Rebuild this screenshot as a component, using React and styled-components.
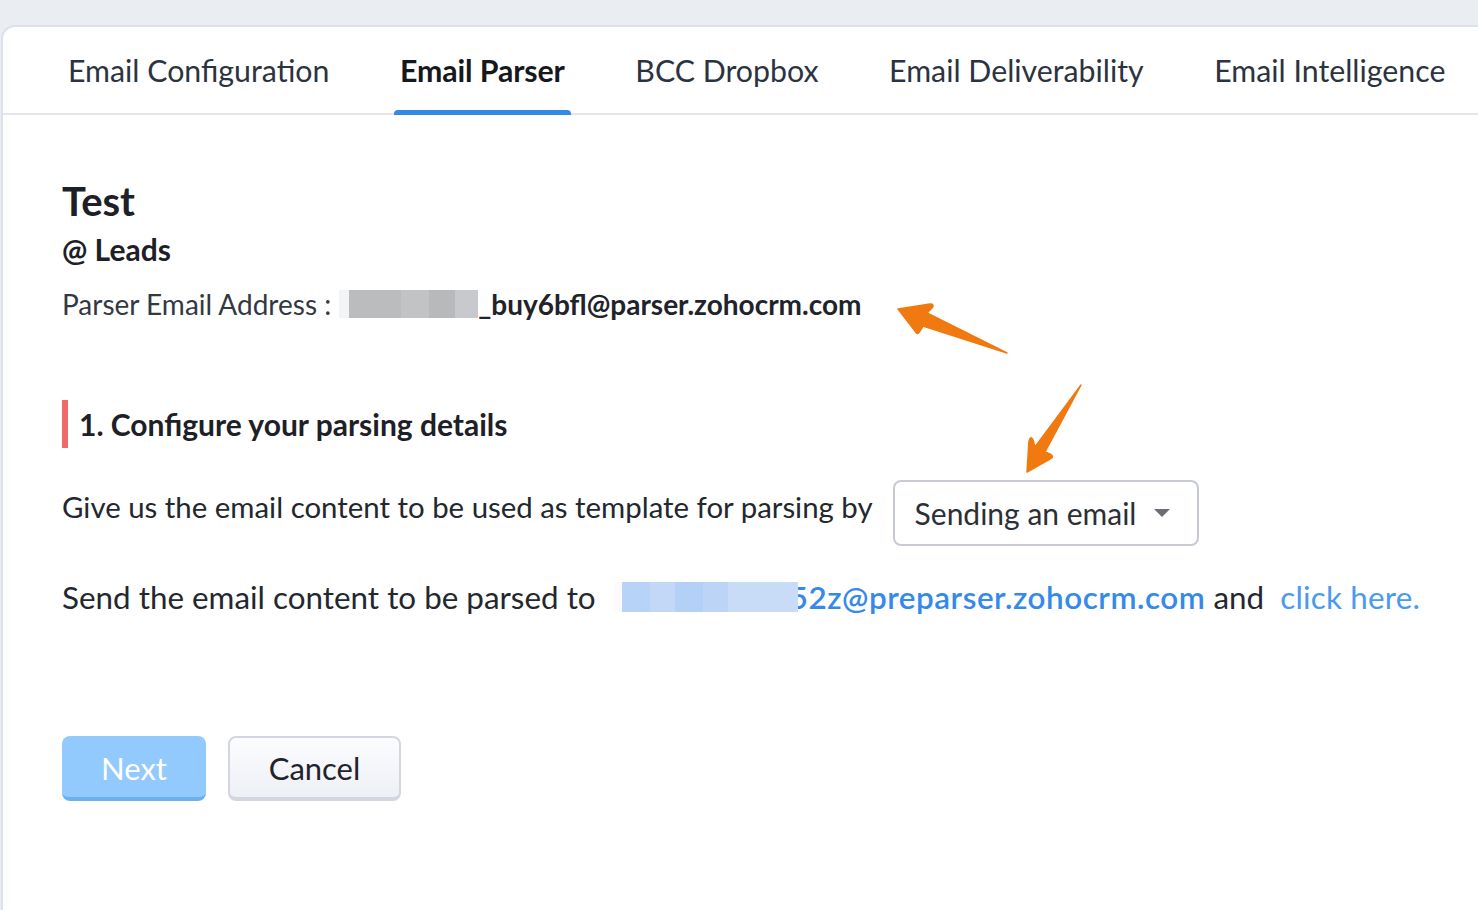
import React from "react";
import styled, { createGlobalStyle } from "styled-components";

const Global = createGlobalStyle`
  html, body { margin: 0; padding: 0; }
  body {
    background: #eaedf2;
    font-family: Lato, "Noto Sans", sans-serif;
    color: #2b2f36;
    width: 1478px;
    height: 910px;
    overflow: hidden;
  }
`;

const Page = styled.div`
  position: relative;
  padding-top: 25px;
  height: 910px;
  box-sizing: border-box;
`;

const Panel = styled.div`
  margin-left: 1px;
  height: 885px;
  background: #fff;
  border-top: 2px solid #dde1ea;
  border-left: 2px solid #dde1ea;
  border-top-left-radius: 14px;
  box-sizing: border-box;
`;

const Tabs = styled.nav`
  display: flex;
  height: 88px;
  border-bottom: 2px solid #e3e6ec;
  padding-left: 59px;
  box-sizing: border-box;
  white-space: nowrap;
`;

const Tab = styled.div`
  position: relative;
  flex-shrink: 0;
  display: flex;
  align-items: center;
  padding: 0 6px;
  margin-right: 58.5px;
  font-size: 30.3px;
  font-weight: ${(p) => (p.$active ? 700 : 400)};
  color: ${(p) => (p.$active ? "#15181d" : "#2c3340")};
  letter-spacing: ${(p) => (p.$active ? "-0.1px" : "0")};
  &::after {
    content: "";
    display: ${(p) => (p.$active ? "block" : "none")};
    position: absolute;
    left: 0;
    right: 0;
    bottom: -2px;
    height: 5px;
    background: #3589e6;
    border-radius: 4px 4px 0 0;
  }
`;

const Content = styled.div`
  padding: 62px 0 0 59px;
`;

const Title = styled.h1`
  margin: 0;
  font-size: 40px;
  font-weight: 700;
  color: #1d2026;
  line-height: 48px;
`;

const Module = styled.div`
  font-size: 30px;
  font-weight: 700;
  color: #1d2026;
  line-height: 48px;
`;

const AddressRow = styled.div`
  display: flex;
  align-items: center;
  margin-top: 11px;
  font-size: 28px;
  color: #333842;
  line-height: 40px;
  white-space: nowrap;
`;

const Blur = styled.span`
  position: relative;
  z-index: 1;
  display: inline-block;
  flex-shrink: 0;
  width: ${(p) => p.$w}px;
  height: ${(p) => p.$h || 28}px;
  background: ${(p) => p.$bg};
  margin-left: ${(p) => p.$ml || 0}px;
  margin-right: ${(p) => p.$mr || 0}px;
`;

const Strong = styled.span`
  font-weight: 700;
  color: #1f232a;
`;

const Section = styled.h2`
  margin: 76px 0 0 0;
  padding-left: 11px;
  border-left: 6px solid #f06a6a;
  font-size: 30px;
  font-weight: 700;
  line-height: 48px;
  color: #1d2026;
`;

const Line = styled.div`
  display: flex;
  align-items: center;
  white-space: nowrap;
  font-size: ${(p) => p.$fs}px;
  line-height: 44px;
  color: #23272e;
  margin-top: ${(p) => p.$mt}px;
`;

const Label = styled.span`
  margin-bottom: 12px;
`;

const Select = styled.div`
  display: flex;
  align-items: center;
  justify-content: space-between;
  width: 306px;
  height: 66px;
  box-sizing: border-box;
  margin-left: 20px;
  padding: 0 27px 0 20px;
  border: 2px solid #c6cad2;
  border-radius: 8px;
  font-size: 30px;
  color: #2b2f36;
`;

const Caret = styled.span`
  width: 0;
  height: 0;
  border-left: 8px solid transparent;
  border-right: 8px solid transparent;
  border-top: 8px solid #6b6e74;
`;

const Link = styled.span`
  color: ${(p) => p.$c};
  font-weight: ${(p) => p.$w || 400};
  letter-spacing: ${(p) => p.$ls || 0}px;
`;

const Buttons = styled.div`
  display: flex;
  gap: 22px;
  margin-top: 117px;
`;

const Button = styled.button`
  height: 65px;
  width: ${(p) => p.$w}px;
  box-sizing: border-box;
  border-radius: 8px;
  font-family: Lato, "Noto Sans", sans-serif;
  font-size: 31px;
  cursor: pointer;
  ${(p) =>
    p.$primary
      ? `background: #93cafd; color: #fff; border: none; border-bottom: 4px solid #6db0ee; padding-top: 4px;`
      : `background: linear-gradient(#fcfcfe, #edf0f6); color: #1f232a; border: 2px solid #d3d6de; border-bottom-width: 4px;`}
`;

const Arrow = styled.svg`
  position: absolute;
  left: ${(p) => p.$x}px;
  top: ${(p) => p.$y}px;
  overflow: visible;
`;

export default function App() {
  return (
    <>
      <Global />
      <Page>
        <Panel>
          <Tabs>
            <Tab>Email Configuration</Tab>
            <Tab $active>Email Parser</Tab>
            <Tab>BCC Dropbox</Tab>
            <Tab>Email Deliverability</Tab>
            <Tab>Email Intelligence</Tab>
          </Tabs>
          <Content>
            <Title>Test</Title>
            <Module>@ Leads</Module>
            <AddressRow>
              Parser Email Address :
              <Blur $w={10} $bg="#f3f4f5" $ml={8} />
              <Blur $w={129} $bg="linear-gradient(90deg,#bbbcbe 0 40%,#c2c3c5 40% 62%,#b8b9bb 62% 82%,#c8c9cc 82%)" />
              <Strong>_buy6bfl@parser.zohocrm.com</Strong>
            </AddressRow>
            <Section>1. Configure your parsing details</Section>
            <Line $fs={29.4} $mt={32}>
              <Label>Give us the email content to be used as template for parsing by</Label>
              <Select>
                Sending an email
                <Caret />
              </Select>
            </Line>
            <Line $fs={31.4} $mt={29}>
              Send the email content to be parsed to
              <Blur $w={8} $h={30} $bg="#fbfbfd" $ml={18} />
              <Blur $w={176} $h={30} $mr={-8} $bg="linear-gradient(90deg,#b7d3f7 0 16%,#c3d8f7 16% 30%,#b3d0f7 30% 46%,#bcd5f7 46% 60%,#c8dcf8 60%)" />
              <Link $c="#3489ea" $w={600} $ls={0.55}>52z@preparser.zohocrm.com</Link>
              &nbsp;and&nbsp;&nbsp;
              <Link $c="#4a9af0" $ls={0.2}>click here.</Link>
            </Line>
            <Buttons>
              <Button $primary $w={144}>Next</Button>
              <Button $w={173}>Cancel</Button>
            </Buttons>
          </Content>
        </Panel>
        <Arrow $x={890} $y={295} width="125" height="65" viewBox="890 295 125 65">
          <path
            d="M898 309 L930 304 Q935 304 932 308 L927 313 L1007 353 L923 326 L920 331 Q917 336 915 331 Z"
            fill="#f07a10"
            stroke="#f07a10"
            strokeWidth="1.5"
            strokeLinejoin="round"
          />
        </Arrow>
        <Arrow $x={1015} $y={375} width="80" height="105" viewBox="1015 375 80 105">
          <path
            d="M1027 472 L1029 441 Q1031 435 1033 440 L1035 447 L1081 385 L1045 452 L1050 454 Q1055 457 1050 459 Z"
            fill="#f07a10"
            stroke="#f07a10"
            strokeWidth="1.5"
            strokeLinejoin="round"
          />
        </Arrow>
      </Page>
    </>
  );
}
